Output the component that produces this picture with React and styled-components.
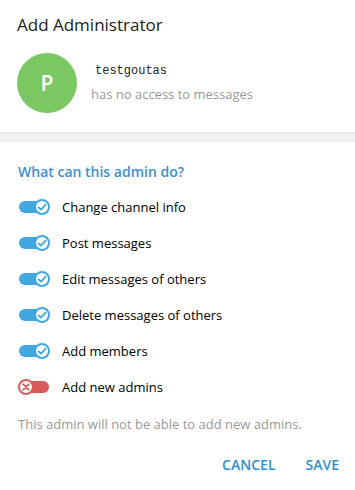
import styled, { createGlobalStyle } from 'styled-components';

const GlobalStyle = createGlobalStyle`
    body{
        margin: 0;
        background: #ffffff;
        font-family: 'Open Sans', 'Liberation Sans', sans-serif;
    }
`

const rights = [
    { label: 'Change channel info', on: true },
    { label: 'Post messages', on: true },
    { label: 'Edit messages of others', on: true },
    { label: 'Delete messages of others', on: true },
    { label: 'Add members', on: true },
    { label: 'Add new admins', on: false },
]

function Toggle({ on }){
    return <Track on={on ? 1 : 0}>
        <Knob on={on ? 1 : 0}>
            {on ?
                <svg width="10" height="10" viewBox="0 0 10 10">
                    <path d="M1.5 5.3 L4 7.6 L8.6 2.6" fill="none" stroke="#40a7e3" strokeWidth="1.7" strokeLinecap="round" strokeLinejoin="round"/>
                </svg>
                :
                <svg width="10" height="10" viewBox="0 0 10 10">
                    <path d="M2.3 2.3 L7.7 7.7 M7.7 2.3 L2.3 7.7" fill="none" stroke="#d95a5a" strokeWidth="1.9" strokeLinecap="round"/>
                </svg>
            }
        </Knob>
    </Track>
}

export default function App(){
    return <>
        <GlobalStyle/>
        <Box>
            <Header>
                <h1>Add Administrator</h1>
                <User>
                    <Avatar>P</Avatar>
                    <div className='info'>
                        <span className='name'>testgoutas</span>
                        <span className='status'>has no access to messages</span>
                    </div>
                </User>
            </Header>
            <Divider/>
            <Rights>
                <h2>What can this admin do?</h2>
                {rights.map((r) => (
                    <Row key={r.label}>
                        <Toggle on={r.on}/>
                        <span>{r.label}</span>
                    </Row>
                ))}
                <Note>This admin will not be able to add new admins.</Note>
            </Rights>
            <Buttons>
                <button>CANCEL</button>
                <button>SAVE</button>
            </Buttons>
        </Box>
    </>
}

const Box = styled.div`
    width: 355px;
    height: 490px;
    background: #ffffff;
    display: flex;
    flex-direction: column;
`

const Header = styled.div`
    padding: 14px 18px 0px 17px;
    height: 118px;

    h1{
        margin: 0;
        font-size: 17px;
        line-height: 22px;
        font-weight: 400;
        color: #222222;
    }
`

const User = styled.div`
    display: flex;
    align-items: center;
    margin-top: 17px;

    .info{
        display: flex;
        flex-direction: column;
        margin-left: 14px;
    }
    .name{
        font-family: 'Liberation Mono', 'DejaVu Sans Mono', monospace;
        font-size: 12px;
        line-height: 16px;
        color: #222222;
        margin-left: 4px;
    }
    .status{
        font-size: 13px;
        line-height: 18px;
        color: #999999;
        margin-top: 6px;
    }
`

const Avatar = styled.div`
    width: 60px;
    height: 60px;
    border-radius: 50%;
    background: #7bc862;
    color: #ffffff;
    display: flex;
    justify-content: center;
    align-items: center;
    font-size: 21px;
    font-weight: 600;
`

const Divider = styled.div`
    height: 9px;
    background: #f1f1f1;
    border-top: 1px solid #e7e7e7;
`

const Rights = styled.div`
    padding: 20px 18px 0px 18px;

    h2{
        margin: 0 0 7px 0;
        font-size: 14px;
        line-height: 20px;
        font-weight: 600;
        color: #3a8fd4;
    }
`

const Row = styled.div`
    display: flex;
    align-items: center;
    height: 36px;

    span{
        margin-left: 13px;
        font-size: 13px;
        color: #000000;
    }
`

const Track = styled.div`
    width: 30px;
    height: 12px;
    border-radius: 6px;
    background: ${(p) => p.on ? '#40a7e3' : '#d95a5a'};
    display: flex;
    align-items: center;
    justify-content: ${(p) => p.on ? 'flex-end' : 'flex-start'};
    margin-left: 1px;
`

const Knob = styled.div`
    width: 12px;
    height: 12px;
    border-radius: 50%;
    background: #ffffff;
    border: 2px solid ${(p) => p.on ? '#40a7e3' : '#d95a5a'};
    display: flex;
    justify-content: center;
    align-items: center;
    flex-shrink: 0;
    margin: 0 -1px;
`

const Note = styled.div`
    margin-top: 10px;
    font-size: 13px;
    line-height: 18px;
    color: #999999;
`

const Buttons = styled.div`
    display: flex;
    justify-content: flex-end;
    gap: 14px;
    padding: 18px 8px 0px 0px;

    button{
        background: none;
        border: none;
        padding: 4px 8px;
        font-family: 'Open Sans', 'Liberation Sans', sans-serif;
        font-size: 14px;
        font-weight: 600;
        color: #2d8fd6;
        cursor: pointer;
    }
`
